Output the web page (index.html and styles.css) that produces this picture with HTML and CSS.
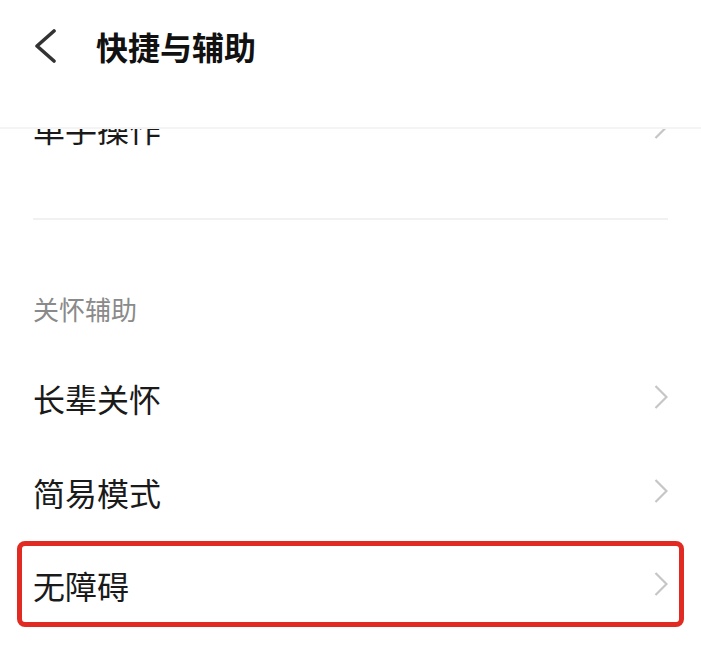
FILE: index.html
```html
<!DOCTYPE html>
<html lang="zh-CN">

<head>
    <meta charset="UTF-8">
    <meta name="viewport" content="width=device-width, initial-scale=1.0">
    <title>快捷与辅助</title>
    <link rel="stylesheet" href="styles.css">
</head>

<body>
    <div class="page">
        <div class="topbar">
            <svg class="back" width="24" height="34" viewBox="0 0 24 34">
                <polyline points="21,2 4,17 21,32" fill="none" stroke="#333" stroke-width="3.6" stroke-linecap="round" stroke-linejoin="round" />
            </svg>
            <h1 class="title">快捷与辅助</h1>
        </div>

        <div class="list">
            <div class="row row-hidden">
                <span class="label">单手操作</span>
                <svg class="arrow" width="14" height="24" viewBox="0 0 14 24">
                    <polyline points="1.5,1 12.5,12 1.5,23" fill="none" stroke="#c6c6c6" stroke-width="2.2" />
                </svg>
            </div>
            <div class="divider"></div>

            <p class="section">关怀辅助</p>

            <div class="row">
                <span class="label">长辈关怀</span>
                <svg class="arrow" width="14" height="24" viewBox="0 0 14 24">
                    <polyline points="1.5,1 12.5,12 1.5,23" fill="none" stroke="#c6c6c6" stroke-width="2.2" />
                </svg>
            </div>
            <div class="row">
                <span class="label">简易模式</span>
                <svg class="arrow" width="14" height="24" viewBox="0 0 14 24">
                    <polyline points="1.5,1 12.5,12 1.5,23" fill="none" stroke="#c6c6c6" stroke-width="2.2" />
                </svg>
            </div>
            <div class="row row-marked">
                <span class="label">无障碍</span>
                <svg class="arrow" width="14" height="24" viewBox="0 0 14 24">
                    <polyline points="1.5,1 12.5,12 1.5,23" fill="none" stroke="#c6c6c6" stroke-width="2.2" />
                </svg>
            </div>
        </div>
    </div>
</body>

</html>
```

FILE: styles.css
```css
* {
    box-sizing: border-box;
}
body {
    margin: 0;
    background-color: white;
    font-family: 'Noto Sans CJK SC', 'Noto Sans', sans-serif;
    color: #1a1a1a;
}
.page {
    width: 701px;
    height: 651px;
    overflow: hidden;
    display: flex;
    flex-direction: column;
}
.topbar {
    height: 129px;
    flex-shrink: 0;
    display: flex;
    align-items: flex-start;
    padding: 27px 33px 0 33px;
    border-bottom: 2px solid #f4f4f4;
    position: relative;
    z-index: 2;
    background-color: white;
}
.back {
    margin-top: 2px;
}
.title {
    margin: 0 0 0 39px;
    font-size: 32px;
    line-height: 38px;
    font-weight: 700;
    color: #111;
}

.list {
    flex: 1;
    overflow: hidden;
    padding: 0 33px;
}
.row {
    height: 94px;
    display: flex;
    align-items: center;
    justify-content: space-between;
}
.row-hidden {
    margin-top: -49px;
}
.label {
    font-size: 32px;
    line-height: 40px;
    margin-top: 2px;
}
.arrow {
    flex-shrink: 0;
}
.divider {
    height: 2px;
    background-color: #f1f1f1;
    margin-top: 44px;
}
.section {
    margin: 0;
    padding: 69px 0 21px 0;
    font-size: 26px;
    line-height: 40px;
    color: #8a8a8a;
}
.row-marked {
    height: 86px;
    margin: 3px -16px 0 -16px;
    padding: 0 11px;
    border: 5px solid #e12b22;
    border-radius: 8px;
}
```
